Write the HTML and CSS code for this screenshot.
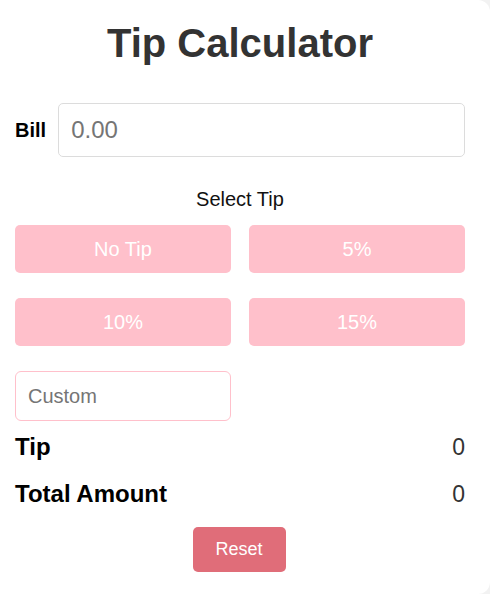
FILE: index.html
```html
<!DOCTYPE html>
<html lang="en">
<head>
<meta charset="utf-8">
<title>Tip Calculator</title>
<link rel="stylesheet" href="styles.css">
</head>
<body>
<main class="card">
  <h1 class="title">Tip Calculator</h1>
  <div class="bill-row">
    <label class="bill-label" for="bill">Bill</label>
    <input class="bill-input" id="bill" type="text" placeholder="0.00">
  </div>
  <p class="select-label">Select Tip</p>
  <div class="tip-grid">
    <button class="tip-btn" type="button">No Tip</button>
    <button class="tip-btn" type="button">5%</button>
    <button class="tip-btn" type="button">10%</button>
    <button class="tip-btn" type="button">15%</button>
  </div>
  <input class="custom-input" type="text" placeholder="Custom">
  <div class="result-row result-tip">
    <span class="result-label">Tip</span>
    <span class="result-value">0</span>
  </div>
  <div class="result-row result-total">
    <span class="result-label">Total Amount</span>
    <span class="result-value">0</span>
  </div>
  <div class="reset-wrap">
    <button class="reset-btn" type="button">Reset</button>
  </div>
</main>
</body>
</html>
```
FILE: styles.css
```css
* { box-sizing: border-box; }

html, body {
  margin: 0;
  padding: 0;
}

body {
  background: #f2f2f2;
  font-family: "Liberation Sans", Arial, sans-serif;
}

.card {
  background: #ffffff;
  width: 490px;
  height: 594px;
  border-radius: 0 12px 12px 0;
  padding: 20px 25px 0 15px;
  overflow: hidden;
}

.title {
  margin: 0;
  font-size: 40px;
  line-height: 46px;
  font-weight: bold;
  color: #333333;
  text-align: center;
}

.bill-row {
  margin-top: 37px;
  display: flex;
  align-items: center;
  gap: 12px;
}

.bill-label {
  font-size: 20px;
  line-height: 23px;
  font-weight: bold;
  color: #000000;
}

.bill-input {
  flex: 1;
  min-width: 0;
  height: 54px;
  padding: 0 12px;
  font-family: inherit;
  font-size: 24px;
  border: 1px solid #dcdcdc;
  border-radius: 5px;
  outline: none;
  color: #333;
}

.bill-input::placeholder,
.custom-input::placeholder {
  color: #757575;
}

.select-label {
  margin: 31px 0 0;
  font-size: 20px;
  line-height: 23px;
  text-align: center;
  color: #111111;
}

.tip-grid {
  margin-top: 14px;
  display: grid;
  grid-template-columns: 1fr 1fr;
  column-gap: 18px;
  row-gap: 25px;
}

.tip-btn {
  height: 48px;
  border: none;
  border-radius: 5px;
  background: #ffc0cb;
  color: #ffffff;
  font-family: inherit;
  font-size: 20px;
  padding: 0;
}

.custom-input {
  display: block;
  margin-top: 25px;
  width: 216px;
  height: 50px;
  padding: 0 12px;
  font-family: inherit;
  font-size: 20px;
  border: 1px solid #ffc0cb;
  border-radius: 6px;
  outline: none;
}

.result-row {
  display: flex;
  justify-content: space-between;
  align-items: baseline;
  font-size: 24px;
  line-height: 28px;
}

.result-tip { margin-top: 12px; }
.result-total { margin-top: 19px; }

.result-label {
  font-weight: bold;
  color: #000000;
}

.result-value {
  color: #333333;
  font-size: 23px;
}

.reset-wrap {
  margin-top: 19px;
  display: flex;
  justify-content: center;
  padding-right: 2px;
}

.reset-btn {
  width: 93px;
  height: 45px;
  border: none;
  border-radius: 5px;
  background: #e06d79;
  color: #ffffff;
  font-family: inherit;
  font-size: 18px;
  padding: 0;
}
```
